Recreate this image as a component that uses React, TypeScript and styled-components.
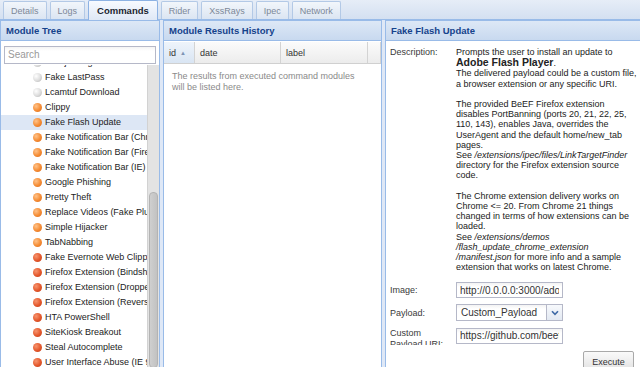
import React from 'react';
import styled, { createGlobalStyle } from 'styled-components';

const Global = createGlobalStyle`
  html, body { margin: 0; padding: 0; }
  body {
    font-family: "Liberation Sans", Arial, sans-serif;
    background: #dfe8f6;
    overflow: hidden;
  }
`;

const Root = styled.div`
  width: 640px;
  height: 367px;
  overflow: hidden;
  display: flex;
  flex-direction: column;
  background: #dfe8f6;
`;

const TabStrip = styled.div`
  flex: none;
  box-sizing: border-box;
  height: 20px;
  display: flex;
  align-items: flex-end;
  gap: 3px;
  padding-left: 3px;
  background: linear-gradient(#e6edf7, #d4e0f1);
  border-bottom: 1px solid #99bbe8;
`;

const Tab = styled.div<{ $active?: boolean }>`
  box-sizing: border-box;
  height: ${p => (p.$active ? 20 : 18)}px;
  margin-bottom: ${p => (p.$active ? -1 : 0)}px;
  padding: 0 ${p => (p.$active ? 8 : 7)}px;
  display: flex;
  align-items: center;
  border: 1px solid ${p => (p.$active ? '#8db2e3' : '#b3c9e6')};
  border-bottom: none;
  border-radius: 2px 2px 0 0;
  background: ${p =>
    p.$active ? 'linear-gradient(#f7faff, #dfe8f6)' : 'linear-gradient(#f2f6fb, #dbe5f2)'};
  font-size: ${p => (p.$active ? 9.5 : 9)}px;
  font-weight: ${p => (p.$active ? 'bold' : 'normal')};
  color: ${p => (p.$active ? '#1b2530' : '#7d8898')};
  white-space: nowrap;
`;

const Main = styled.div`
  flex: 1;
  min-height: 0;
  display: flex;
  gap: 3px;
`;

const Panel = styled.section<{ $w?: number }>`
  box-sizing: border-box;
  display: flex;
  flex-direction: column;
  min-height: 0;
  border: 1px solid #99bbe8;
  border-bottom: none;
  background: #fff;
  ${p => (p.$w ? `width: ${p.$w}px; flex: none;` : 'flex: 1; min-width: 0; border-right: none;')}
`;

const PanelHeader = styled.div`
  flex: none;
  box-sizing: border-box;
  height: 20px;
  padding: 0 5px;
  display: flex;
  align-items: center;
  background: linear-gradient(#dde8f6, #c8d9ef);
  border-bottom: 1px solid #99bbe8;
  font-weight: bold;
  font-size: 9.5px;
  color: #15428b;
  white-space: nowrap;
`;

/* ---------- Module tree ---------- */

const SearchWrap = styled.div`
  flex: none;
  padding: 3px 3px 1px;
`;

const SearchInput = styled.input`
  box-sizing: border-box;
  width: 100%;
  height: 18px;
  border: 1px solid #b5b8c8;
  padding: 0 3px;
  font-family: "Liberation Sans", Arial, sans-serif;
  font-size: 10px;
  color: #333;
  background: linear-gradient(#f4f4f4, #fff 4px);
  outline: none;
  &::placeholder { color: #9a9a9a; }
`;

const TreeBody = styled.div`
  flex: 1;
  min-height: 0;
  display: flex;
`;

const TreeList = styled.div`
  flex: 1;
  min-width: 0;
  overflow: hidden;
`;

const TreeInner = styled.div`
  margin-top: -10px;
`;

const TreeRow = styled.div<{ $selected?: boolean }>`
  height: 15px;
  display: flex;
  align-items: center;
  gap: 3px;
  padding-left: 32px;
  white-space: nowrap;
  overflow: hidden;
  font-size: 9px;
  color: #222;
  background: ${p => (p.$selected ? '#dde7f5' : 'transparent')};
`;

type Kind = 'grey' | 'orange' | 'red';

const bulletBg: Record<Kind, string> = {
  grey: 'radial-gradient(circle at 35% 35%, #ffffff, #dcdcdc 55%, #aeaeae)',
  orange: 'radial-gradient(circle at 35% 35%, #ffc38a, #f48b33 55%, #d96a1c)',
  red: 'radial-gradient(circle at 35% 35%, #f7956f, #e3572b 55%, #bd3d17)',
};

const Bullet = styled.span<{ $kind: Kind }>`
  flex: none;
  width: 9px;
  height: 9px;
  border-radius: 50%;
  background: ${p => bulletBg[p.$kind]};
`;

const ScrollTrack = styled.div`
  flex: none;
  box-sizing: border-box;
  width: 12px;
  padding: 127px 1px 0 1px;
  background: #e3e3e3;
  border-left: 1px solid #d2d2d2;
`;

const ScrollThumb = styled.div`
  box-sizing: border-box;
  height: 176px;
  border-radius: 4px;
  border: 1px solid #b3b3b3;
  background: linear-gradient(90deg, #cfcfcf, #c2c2c2);
`;

/* ---------- Results grid ---------- */

const GridHeader = styled.div`
  flex: none;
  display: flex;
  height: 21px;
  margin-top: 1px;
  border-bottom: 1px solid #d0d0d0;
  background: linear-gradient(#fbfbfb, #ececec);
`;

const HeadCell = styled.div<{ $w?: number; $sorted?: boolean }>`
  box-sizing: border-box;
  ${p => (p.$w ? `width: ${p.$w}px; flex: none;` : 'flex: 1;')}
  display: flex;
  align-items: center;
  gap: 4px;
  padding: 0 5px;
  border-right: 1px solid #d3d3d3;
  font-size: 9px;
  color: #333;
  background: ${p => (p.$sorted ? 'linear-gradient(#eef4fb, #d9e5f3)' : 'transparent')};
`;

const SortArrow = styled.span`
  font-size: 6px;
  color: #7d93b4;
`;

const EmptyText = styled.div`
  padding: 7px 8px 0;
  font-size: 9px;
  line-height: 10.5px;
  color: #8a8a8a;
`;

/* ---------- Command detail ---------- */

const DetailBody = styled.div`
  flex: 1;
  min-height: 0;
  padding: 6px 0 0 4px;
  display: flex;
  flex-direction: column;
`;

const FieldRow = styled.div<{ $top?: number }>`
  display: grid;
  grid-template-columns: 66px 107px;
  align-items: center;
  margin-top: ${p => p.$top ?? 0}px;
`;

const DescRow = styled.div`
  display: grid;
  grid-template-columns: 66px 1fr;
  align-items: start;
`;

const Label = styled.div<{ $clip?: number }>`
  font-size: 9px;
  line-height: 10.2px;
  color: #3a3a3a;
  ${p => (p.$clip ? `height: ${p.$clip}px; overflow: hidden; align-self: start; margin-top: 2px;` : '')}
`;

const DescText = styled.div`
  font-size: 9px;
  line-height: 10.2px;
  color: #222;
  white-space: nowrap;
`;

const Para = styled.p`
  margin: 0 0 10.2px;
  &:last-child { margin-bottom: 0; }
`;

const Strong = styled.b`
  font-size: 10.5px;
  line-height: 10px;
`;

const TextField = styled.input`
  box-sizing: border-box;
  width: 107px;
  height: 16px;
  border: 1px solid #b5b8c8;
  padding: 0 3px;
  font-family: "Liberation Sans", Arial, sans-serif;
  font-size: 10px;
  color: #333;
  background: linear-gradient(#f3f3f3, #fff 4px);
  outline: none;
`;

const Combo = styled.div`
  box-sizing: border-box;
  width: 107px;
  height: 17px;
  display: flex;
  border: 1px solid #b5b8c8;
  background: linear-gradient(#f3f3f3, #fff 4px);
`;

const ComboText = styled.div`
  flex: 1;
  display: flex;
  align-items: center;
  padding: 0 4px;
  font-size: 10px;
  color: #333;
`;

const ComboTrigger = styled.div`
  flex: none;
  width: 15px;
  display: flex;
  align-items: center;
  justify-content: center;
  border-left: 1px solid #b5b8c8;
  background: linear-gradient(#f7f9fc, #e3e9f2);
`;

const ButtonBar = styled.div`
  display: flex;
  justify-content: flex-end;
  padding-right: 6px;
  margin-top: 6px;
`;

const Button = styled.button`
  box-sizing: border-box;
  width: 51px;
  height: 22px;
  border: 1px solid #a9a9a9;
  border-radius: 2px;
  background: linear-gradient(#fafafa, #e0e0e0);
  font-family: "Liberation Sans", Arial, sans-serif;
  font-size: 9px;
  color: #333;
  padding: 0;
`;

const tabs = ['Details', 'Logs', 'Commands', 'Rider', 'XssRays', 'Ipec', 'Network'];

const modules: { name: string; kind: Kind; selected?: boolean }[] = [
  { name: 'Clickjacking', kind: 'grey' },
  { name: 'Fake LastPass', kind: 'grey' },
  { name: 'Lcamtuf Download', kind: 'grey' },
  { name: 'Clippy', kind: 'orange' },
  { name: 'Fake Flash Update', kind: 'orange', selected: true },
  { name: 'Fake Notification Bar (Chrome)', kind: 'orange' },
  { name: 'Fake Notification Bar (Firefox)', kind: 'orange' },
  { name: 'Fake Notification Bar (IE)', kind: 'orange' },
  { name: 'Google Phishing', kind: 'orange' },
  { name: 'Pretty Theft', kind: 'orange' },
  { name: 'Replace Videos (Fake Plugin)', kind: 'orange' },
  { name: 'Simple Hijacker', kind: 'orange' },
  { name: 'TabNabbing', kind: 'orange' },
  { name: 'Fake Evernote Web Clipper Login', kind: 'red' },
  { name: 'Firefox Extension (Bindshell)', kind: 'red' },
  { name: 'Firefox Extension (Dropper)', kind: 'red' },
  { name: 'Firefox Extension (Reverse Shell)', kind: 'red' },
  { name: 'HTA PowerShell', kind: 'red' },
  { name: 'SiteKiosk Breakout', kind: 'red' },
  { name: 'Steal Autocomplete', kind: 'red' },
  { name: 'User Interface Abuse (IE 9/10)', kind: 'red' },
];

export default function App() {
  return (
    <Root>
      <Global />
      <TabStrip>
        {tabs.map(t => (
          <Tab key={t} $active={t === 'Commands'}>{t}</Tab>
        ))}
      </TabStrip>
      <Main>
        <Panel $w={160}>
          <PanelHeader>Module Tree</PanelHeader>
          <SearchWrap>
            <SearchInput placeholder="Search" />
          </SearchWrap>
          <TreeBody>
            <TreeList>
              <TreeInner>
                {modules.map(m => (
                  <TreeRow key={m.name} $selected={m.selected}>
                    <Bullet $kind={m.kind} />
                    {m.name}
                  </TreeRow>
                ))}
              </TreeInner>
            </TreeList>
            <ScrollTrack>
              <ScrollThumb />
            </ScrollTrack>
          </TreeBody>
        </Panel>

        <Panel $w={219}>
          <PanelHeader>Module Results History</PanelHeader>
          <GridHeader>
            <HeadCell $w={31} $sorted>
              id <SortArrow>▲</SortArrow>
            </HeadCell>
            <HeadCell $w={86}>date</HeadCell>
            <HeadCell $w={87}>label</HeadCell>
            <HeadCell />
          </GridHeader>
          <EmptyText>
            The results from executed command modules
            <br />
            will be listed here.
          </EmptyText>
        </Panel>

        <Panel>
          <PanelHeader>Fake Flash Update</PanelHeader>
          <DetailBody>
            <DescRow>
              <Label>Description:</Label>
              <DescText>
                <Para>
                  Prompts the user to install an update to
                  <br />
                  <Strong>Adobe Flash Player</Strong>.
                  <br />
                  The delivered payload could be a custom file,
                  <br />
                  a browser extension or any specific URI.
                </Para>
                <Para>
                  The provided BeEF Firefox extension
                  <br />
                  disables PortBanning (ports 20, 21, 22, 25,
                  <br />
                  110, 143), enables Java, overrides the
                  <br />
                  UserAgent and the default home/new_tab
                  <br />
                  pages.
                  <br />
                  See <i>/extensions/ipec/files/LinkTargetFinder</i>
                  <br />
                  directory for the Firefox extension source
                  <br />
                  code.
                </Para>
                <Para>
                  The Chrome extension delivery works on
                  <br />
                  Chrome &lt;= 20. From Chrome 21 things
                  <br />
                  changed in terms of how extensions can be
                  <br />
                  loaded.
                  <br />
                  See <i>/extensions/demos</i>
                  <br />
                  <i>/flash_update_chrome_extension</i>
                  <br />
                  <i>/manifest.json</i> for more info and a sample
                  <br />
                  extension that works on latest Chrome.
                </Para>
              </DescText>
            </DescRow>

            <FieldRow $top={10}>
              <Label>Image:</Label>
              <TextField readOnly defaultValue="http://0.0.0.0:3000/adobe/flash_update.png" />
            </FieldRow>
            <FieldRow $top={6}>
              <Label>Payload:</Label>
              <Combo>
                <ComboText>Custom_Payload</ComboText>
                <ComboTrigger>
                  <svg width="8" height="6" viewBox="0 0 8 6">
                    <path d="M1 1.2 L4 4.4 L7 1.2" fill="none" stroke="#3f6aa6" strokeWidth="1.6" />
                  </svg>
                </ComboTrigger>
              </Combo>
            </FieldRow>
            <FieldRow $top={5}>
              <Label $clip={17}>
                Custom
                <br />
                Payload URI:
              </Label>
              <TextField readOnly defaultValue="https://github.com/beefproject/beef/archive/master.zip" />
            </FieldRow>
            <ButtonBar>
              <Button>Execute</Button>
            </ButtonBar>
          </DetailBody>
        </Panel>
      </Main>
    </Root>
  );
}
